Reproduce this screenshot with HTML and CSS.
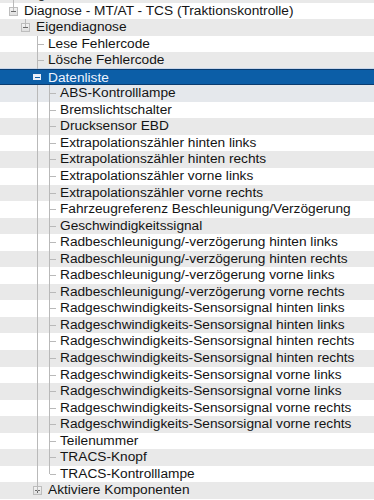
FILE: index.html
```html
<!DOCTYPE html>
<html lang="de">
  <head>
    <title>Diagnose - Baumansicht</title>
    <meta charset="UTF-8" />
    <meta name="viewport" content="width=device-width" />
    <link rel="stylesheet" href="styles.css">
  </head>
  <body>
    <ul class="tree">
      <li class="row odd"><span class="node box minus down"></span><span class="label">Ergebnisse</span></li>
      <li class="row"><span class="node box minus up"></span><span class="label">Diagnose - MT/AT - TCS (Traktionskontrolle)</span></li>
      <li class="row odd"><span class="guide"></span><span class="node box minus up"></span><span class="label">Eigendiagnose</span></li>
      <li class="row"><span class="guide"></span><span class="guide"></span><span class="node tee"></span><span class="label">Lese Fehlercode</span></li>
      <li class="row odd"><span class="guide"></span><span class="guide"></span><span class="node tee"></span><span class="label">Lösche Fehlercode</span></li>
      <li class="row selected"><span class="guide"></span><span class="guide"></span><span class="node box minus up down"></span><span class="label">Datenliste</span></li>
      <li class="row odd after-sel"><span class="guide"></span><span class="guide"></span><span class="guide v"></span><span class="node tee"></span><span class="label">ABS-Kontrolllampe</span></li>
      <li class="row"><span class="guide"></span><span class="guide"></span><span class="guide v"></span><span class="node tee"></span><span class="label">Bremslichtschalter</span></li>
      <li class="row odd"><span class="guide"></span><span class="guide"></span><span class="guide v"></span><span class="node tee"></span><span class="label">Drucksensor EBD</span></li>
      <li class="row"><span class="guide"></span><span class="guide"></span><span class="guide v"></span><span class="node tee"></span><span class="label">Extrapolationszähler hinten links</span></li>
      <li class="row odd"><span class="guide"></span><span class="guide"></span><span class="guide v"></span><span class="node tee"></span><span class="label">Extrapolationszähler hinten rechts</span></li>
      <li class="row"><span class="guide"></span><span class="guide"></span><span class="guide v"></span><span class="node tee"></span><span class="label">Extrapolationszähler vorne links</span></li>
      <li class="row odd"><span class="guide"></span><span class="guide"></span><span class="guide v"></span><span class="node tee"></span><span class="label">Extrapolationszähler vorne rechts</span></li>
      <li class="row"><span class="guide"></span><span class="guide"></span><span class="guide v"></span><span class="node tee"></span><span class="label">Fahrzeugreferenz Beschleunigung/Verzögerung</span></li>
      <li class="row odd"><span class="guide"></span><span class="guide"></span><span class="guide v"></span><span class="node tee"></span><span class="label">Geschwindigkeitssignal</span></li>
      <li class="row"><span class="guide"></span><span class="guide"></span><span class="guide v"></span><span class="node tee"></span><span class="label">Radbeschleunigung/-verzögerung hinten links</span></li>
      <li class="row odd"><span class="guide"></span><span class="guide"></span><span class="guide v"></span><span class="node tee"></span><span class="label">Radbeschleunigung/-verzögerung hinten rechts</span></li>
      <li class="row"><span class="guide"></span><span class="guide"></span><span class="guide v"></span><span class="node tee"></span><span class="label">Radbeschleunigung/-verzögerung vorne links</span></li>
      <li class="row odd"><span class="guide"></span><span class="guide"></span><span class="guide v"></span><span class="node tee"></span><span class="label">Radbeschleunigung/-verzögerung vorne rechts</span></li>
      <li class="row"><span class="guide"></span><span class="guide"></span><span class="guide v"></span><span class="node tee"></span><span class="label">Radgeschwindigkeits-Sensorsignal hinten links</span></li>
      <li class="row odd"><span class="guide"></span><span class="guide"></span><span class="guide v"></span><span class="node tee"></span><span class="label">Radgeschwindigkeits-Sensorsignal hinten links</span></li>
      <li class="row"><span class="guide"></span><span class="guide"></span><span class="guide v"></span><span class="node tee"></span><span class="label">Radgeschwindigkeits-Sensorsignal hinten rechts</span></li>
      <li class="row odd"><span class="guide"></span><span class="guide"></span><span class="guide v"></span><span class="node tee"></span><span class="label">Radgeschwindigkeits-Sensorsignal hinten rechts</span></li>
      <li class="row"><span class="guide"></span><span class="guide"></span><span class="guide v"></span><span class="node tee"></span><span class="label">Radgeschwindigkeits-Sensorsignal vorne links</span></li>
      <li class="row odd"><span class="guide"></span><span class="guide"></span><span class="guide v"></span><span class="node tee"></span><span class="label">Radgeschwindigkeits-Sensorsignal vorne links</span></li>
      <li class="row"><span class="guide"></span><span class="guide"></span><span class="guide v"></span><span class="node tee"></span><span class="label">Radgeschwindigkeits-Sensorsignal vorne rechts</span></li>
      <li class="row odd"><span class="guide"></span><span class="guide"></span><span class="guide v"></span><span class="node tee"></span><span class="label">Radgeschwindigkeits-Sensorsignal vorne rechts</span></li>
      <li class="row"><span class="guide"></span><span class="guide"></span><span class="guide v"></span><span class="node tee"></span><span class="label">Teilenummer</span></li>
      <li class="row odd"><span class="guide"></span><span class="guide"></span><span class="guide v"></span><span class="node tee"></span><span class="label">TRACS-Knopf</span></li>
      <li class="row"><span class="guide"></span><span class="guide"></span><span class="guide v"></span><span class="node end"></span><span class="label">TRACS-Kontrolllampe</span></li>
      <li class="row odd"><span class="guide"></span><span class="guide"></span><span class="node box plus up"></span><span class="label">Aktiviere Komponenten</span></li>
    </ul>
  </body>
</html>
```

FILE: styles.css
```css
/* Reset */
* {
  margin: 0;
  padding: 0;
  box-sizing: border-box;
}

body {
  background: #ffffff;
  font-family: "Liberation Sans", Arial, sans-serif;
  font-size: 13.7px;
  color: #141414;
  overflow: hidden;
}

/* Tree list */
.tree {
  list-style: none;
  margin-top: -14.05px;
}

.row {
  display: flex;
  align-items: stretch;
  height: 16.55px;
  line-height: 16.55px;
  padding-left: 8px;
  background: #ffffff;
  white-space: nowrap;
}

.row.odd {
  background: #e9e9e9;
}

.row.after-sel {
  background: #e5e8ec;
}

.row.selected {
  background: #0c5ea7;
  border-top: 1px solid #0a3c70;
  border-bottom: 1px solid #0a3c70;
  box-shadow: 0 -1px 0 #c9d6ea;
  color: #eef4ff;
}

.label {
  padding-left: 4px;
}

/* Guide columns */
.guide,
.node {
  position: relative;
  width: 12px;
  flex: none;
}

.guide.v::before,
.node.tee::before,
.node.end::before,
.node.up::before,
.node.down::after {
  content: "";
  position: absolute;
  left: 5px;
  width: 1px;
  background: #b9b9b9;
}

.guide.v::before,
.node.tee::before {
  top: 0;
  bottom: 0;
}

.node.end::before,
.node.up::before {
  top: 0;
  height: 50%;
}

.node.down::after {
  top: 50%;
  bottom: 0;
}

.selected .node.up::before,
.selected .node.down::after {
  background: transparent;
}

/* Horizontal connector */
.node.tee,
.node.end {
  background-image: linear-gradient(#b9b9b9, #b9b9b9);
  background-repeat: no-repeat;
  background-size: 7px 1px;
  background-position: 6px 8px;
}

/* Expand / collapse box */
.node.box {
  background-repeat: no-repeat;
  z-index: 1;
}

.node.box::before {
  z-index: -1;
}

.node.minus {
  background-image: linear-gradient(#6a6a6a, #6a6a6a), linear-gradient(#bdbdbd, #bdbdbd),
    linear-gradient(#bdbdbd, #bdbdbd), linear-gradient(#bdbdbd, #bdbdbd),
    linear-gradient(#bdbdbd, #bdbdbd), linear-gradient(#f6f6f6, #dcdcdc);
  background-size: 5px 1px, 9px 1px, 9px 1px, 1px 9px, 1px 9px, 9px 9px;
  background-position: 3px 8px, 1px 4px, 1px 12px, 1px 4px, 9px 4px, 1px 4px;
}

.node.plus {
  background-image: linear-gradient(#6a6a6a, #6a6a6a), linear-gradient(#6a6a6a, #6a6a6a),
    linear-gradient(#bdbdbd, #bdbdbd), linear-gradient(#bdbdbd, #bdbdbd),
    linear-gradient(#bdbdbd, #bdbdbd), linear-gradient(#bdbdbd, #bdbdbd),
    linear-gradient(#f6f6f6, #dcdcdc);
  background-size: 5px 1px, 1px 5px, 9px 1px, 9px 1px, 1px 9px, 1px 9px, 9px 9px;
  background-position: 3px 8px, 5px 6px, 1px 4px, 1px 12px, 1px 4px, 9px 4px, 1px 4px;
}

.selected .node.minus {
  background-image: linear-gradient(#0c5ea7, #0c5ea7), linear-gradient(#e8eef8, #e8eef8);
  background-size: 5px 1px, 8px 6px;
  background-position: 3px 7px, 1px 4px;
}
```
